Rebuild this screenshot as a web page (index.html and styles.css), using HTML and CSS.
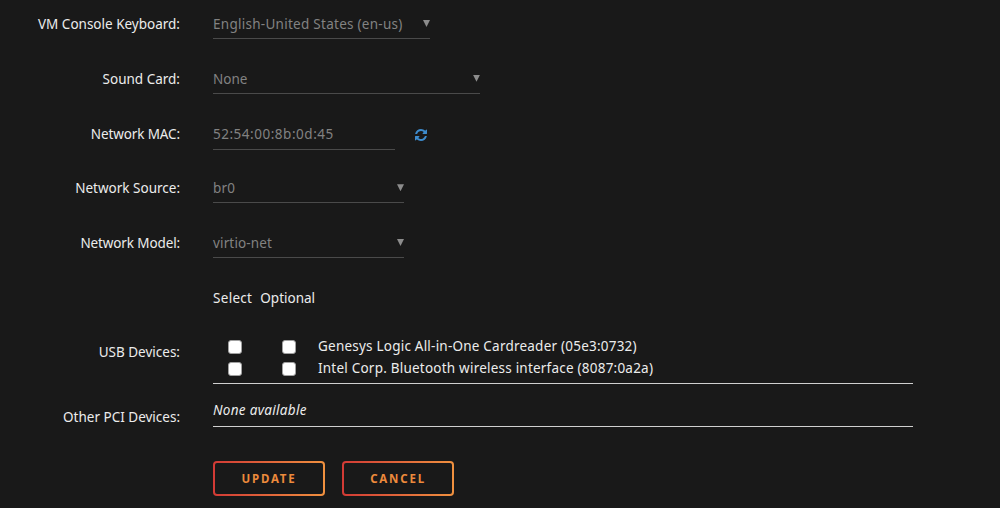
FILE: index.html
```html
<!DOCTYPE html>
<html lang="en">
<head>
    <meta charset="UTF-8">
    <meta name="viewport" content="width=device-width, initial-scale=1.0">
    <title>Update VM</title>
    <link rel="stylesheet" href="styles.css">
</head>
<body>
    <form id="vmForm">
        <div class="form-row">
            <label>VM Console Keyboard:</label>
            <div class="select keyboard"><span>English-United States (en-us)</span><i class="arrow"></i></div>
        </div>
        <div class="form-row">
            <label>Sound Card:</label>
            <div class="select sound"><span>None</span><i class="arrow"></i></div>
        </div>
        <div class="form-row">
            <label class="tight">Network MAC:</label>
            <div class="select mac"><span>52:54:00:8b:0d:45</span></div>
            <svg class="refresh" viewBox="0 0 1536 1536">
                <path d="M1511 928q0 5-1 7-64 268-268 434.500T764 1536q-146 0-282.500-55T238 1324l-129 129q-19 19-45 19t-45-19-19-45V960q0-26 19-45t45-19h448q26 0 45 19t19 45-19 45l-137 137q71 66 161 102t187 36q134 0 250-65t186-179q11-17 53-117 8-23 30-23h192q13 0 22.500 9.500t9.500 22.500zm25-800v448q0 26-19 45t-45 19h-448q-26 0-45-19t-19-45 19-45l138-138Q969 256 768 256q-134 0-250 65T332 500q-11 17-53 117-8 23-30 23H50q-13 0-22.500-9.500T18 608v-7q65-268 270-434.500T768 0q146 0 284 55.500T1297 212l130-129q19-19 45-19t45 19 19 45z"/>
            </svg>
        </div>
        <div class="form-row">
            <label>Network Source:</label>
            <div class="select network"><span>br0</span><i class="arrow"></i></div>
        </div>
        <div class="form-row">
            <label class="tight">Network Model:</label>
            <div class="select network"><span>virtio-net</span><i class="arrow"></i></div>
        </div>
        <div class="form-row heading">
            <label></label>
            <span class="wide">Select</span>
            <span>Optional</span>
        </div>
        <div class="form-row usb">
            <label>USB Devices:</label>
            <div class="devices">
                <div class="device">
                    <input type="checkbox">
                    <input type="checkbox">
                    <span>Genesys Logic All-in-One Cardreader (05e3:0732)</span>
                </div>
                <div class="device">
                    <input type="checkbox">
                    <input type="checkbox">
                    <span>Intel Corp. Bluetooth wireless interface (8087:0a2a)</span>
                </div>
            </div>
        </div>
        <div class="form-row pci">
            <label>Other PCI Devices:</label>
            <div class="devices none"><em>None available</em></div>
        </div>
        <div class="buttons">
            <button type="button">Update</button>
            <button type="button">Cancel</button>
        </div>
    </form>
</body>
</html>
```
FILE: styles.css
```css
body {
    margin: 0;
    height: 508px;
    overflow: hidden;
    background-color: #191919;
    color: #ececec;
    font-family: "Noto Sans", sans-serif;
    font-size: 13.5px;
    line-height: 20px;
}
.form-row {
    display: flex;
    height: 40px;
    padding-top: 14px;
    margin-bottom: 0.75px;
}
label {
    width: 180px;
    margin-right: 33px;
    text-align: right;
    white-space: nowrap;
}
.tight {
    letter-spacing: -0.12px;
}
.select {
    display: flex;
    justify-content: space-between;
    box-sizing: border-box;
    height: 25px;
    border-bottom: 1px solid #4a4a4a;
    color: #828282;
}
.keyboard {
    width: 217px;
    letter-spacing: 0.27px;
}
.sound {
    width: 267px;
}
.mac {
    width: 182px;
    height: 26px;
    letter-spacing: 0.52px;
}
.network {
    width: 191px;
    letter-spacing: 0.15px;
}
.arrow {
    width: 7px;
    height: 7px;
    margin-top: 6px;
    background: #8c8c8c;
    clip-path: polygon(0 0, 100% 0, 50% 100%);
}
.refresh {
    width: 12px;
    height: 12px;
    margin: 5px 0 0 20px;
    fill: #3d8bcd;
}
.heading span {
    margin-right: 8px;
}
.heading .wide {
    letter-spacing: 0.3px;
}
.usb {
    height: 51px;
    padding-top: 13px;
}
.devices {
    box-sizing: border-box;
    width: 700px;
    height: 49px;
    margin-top: -7px;
    border-bottom: 1px solid #d0d0d0;
    letter-spacing: 0.22px;
}
.device {
    display: flex;
    align-items: center;
    height: 22px;
    padding-left: 15px;
}
input {
    appearance: none;
    flex: none;
    width: 14px;
    height: 14px;
    margin: 3px 40px 0 0;
    border: 1px solid #a0a0a0;
    border-radius: 3px;
    background: #fff;
}
input + input {
    margin-right: 22px;
}
.pci {
    height: 53px;
}
.none {
    height: 27px;
    letter-spacing: 0.3px;
}
.buttons {
    display: flex;
    gap: 17px;
    padding-left: 213px;
}
button {
    width: 112px;
    height: 35px;
    padding: 0;
    border: 2px solid transparent;
    border-radius: 4px;
    background: linear-gradient(#191919, #191919) padding-box, linear-gradient(90deg, #d23a35, #f0913f) border-box;
    color: #ed8a3c;
    font-family: "Noto Sans", sans-serif;
    font-size: 11.5px;
    font-weight: bold;
    letter-spacing: 1.8px;
    text-transform: uppercase;
}
```
